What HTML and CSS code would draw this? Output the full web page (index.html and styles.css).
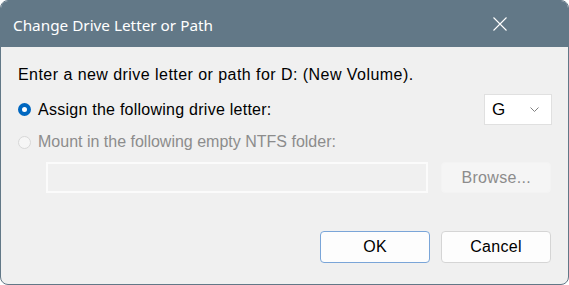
FILE: index.html
```html
<!DOCTYPE html>
<html lang="en">
  <head>
    <meta charset="UTF-8" />
    <meta name="viewport" content="width=device-width, initial-scale=1.0" />
    <title>Change Drive Letter or Path</title>
    <link rel="stylesheet" href="styles.css">
  </head>
  <body>
    <div class="dialog">
      <div class="titlebar">
        <span class="title">Change Drive Letter or Path</span>
        <button class="close" aria-label="Close">
          <svg width="14" height="14" viewBox="0 0 14 14">
            <path d="M0.5 0.5 L13.5 13.5 M13.5 0.5 L0.5 13.5" stroke="#ffffff" stroke-width="1.1" fill="none" />
          </svg>
        </button>
      </div>
      <div class="content">
        <p class="intro">Enter a new drive letter or path for D: (New Volume).</p>

        <div class="row">
          <label class="radio">
            <span class="dot checked"></span>
            Assign the following drive letter:
          </label>
          <div class="combo">
            <span>G</span>
            <svg width="9" height="5" viewBox="0 0 9 5">
              <path d="M0.5 0.5 L4.5 4.5 L8.5 0.5" stroke="#808080" stroke-width="1" fill="none" />
            </svg>
          </div>
        </div>

        <label class="radio disabled">
          <span class="dot"></span>
          Mount in the following empty NTFS folder:
        </label>

        <div class="folder-row">
          <div class="path-box"></div>
          <button class="btn browse" disabled>Browse...</button>
        </div>

        <div class="actions">
          <button class="btn primary">OK</button>
          <button class="btn">Cancel</button>
        </div>
      </div>
    </div>
  </body>
</html>
```

FILE: styles.css
```css
html, body {
  margin: 0;
  height: 100%;
  background-color: #ffffff;
}
body {
  font-family: "Liberation Sans", Arial, sans-serif;
  font-size: 16px;
  color: #000;
}
.dialog {
  box-sizing: border-box;
  height: 285px;
  width: 569px;
  border: 1px solid #627887;
  border-radius: 8px;
  overflow: hidden;
  background-color: #f0f0f0;
  display: flex;
  flex-direction: column;
}
.titlebar {
  height: 46px;
  background-color: #627887;
  display: flex;
  align-items: center;
  justify-content: space-between;
  padding: 0 0 0 12px;
  flex-shrink: 0;
}
.title {
  font-family: "Noto Sans", "Open Sans", sans-serif;
  font-size: 15.3px;
  color: #ffffff;
  margin-top: 1px;
}
.close {
  width: 46px;
  height: 46px;
  border: none;
  background: transparent;
  margin-right: 45px;
  display: flex;
  align-items: center;
  justify-content: center;
  padding: 0;
}
.content {
  padding: 18px 17px 0 17px;
}
.intro {
  margin: 0;
  line-height: 20px;
  letter-spacing: 0.45px;
}
.row {
  display: flex;
  align-items: center;
  justify-content: space-between;
  margin: 9px -1px 0 0;
}
.radio {
  display: flex;
  align-items: center;
  gap: 7px;
  line-height: 20px;
  letter-spacing: 0.25px;
}
.radio.disabled {
  color: #8c8c8c;
  margin-top: 7px;
  letter-spacing: 0;
}
.dot {
  box-sizing: border-box;
  width: 13px;
  height: 13px;
  border-radius: 50%;
  border: 1px solid #d8d8d8;
  background-color: #f6f6f6;
}
.dot.checked {
  border: 4px solid #0067c0;
  background-color: #ffffff;
}
.combo {
  box-sizing: border-box;
  width: 68px;
  height: 31px;
  background-color: #ffffff;
  border: 1px solid #e0e0e0;
  display: flex;
  align-items: center;
  justify-content: space-between;
  padding: 0 12px 0 7px;
  font-size: 17px;
}
.folder-row {
  display: flex;
  gap: 13px;
  margin: 10px 0 0 28px;
}
.path-box {
  box-sizing: border-box;
  width: 384px;
  height: 31px;
  border: 2px solid #fbfbfb;
  background-color: #f0f0f0;
}
.btn {
  box-sizing: border-box;
  width: 110px;
  height: 32px;
  font-family: "Liberation Sans", Arial, sans-serif;
  font-size: 16px;
  letter-spacing: 0.3px;
  color: #000;
  background-color: #fdfdfd;
  border: 1px solid #d5d5d5;
  border-radius: 4px;
}
.btn.browse {
  height: 31px;
  background-color: #f5f5f5;
  border-color: #f3f3f3;
  color: #8c8c8c;
}
.btn.primary {
  border-color: #7aa5d8;
}
.actions {
  display: flex;
  justify-content: flex-end;
  gap: 11px;
  margin-top: 38px;
}
```
